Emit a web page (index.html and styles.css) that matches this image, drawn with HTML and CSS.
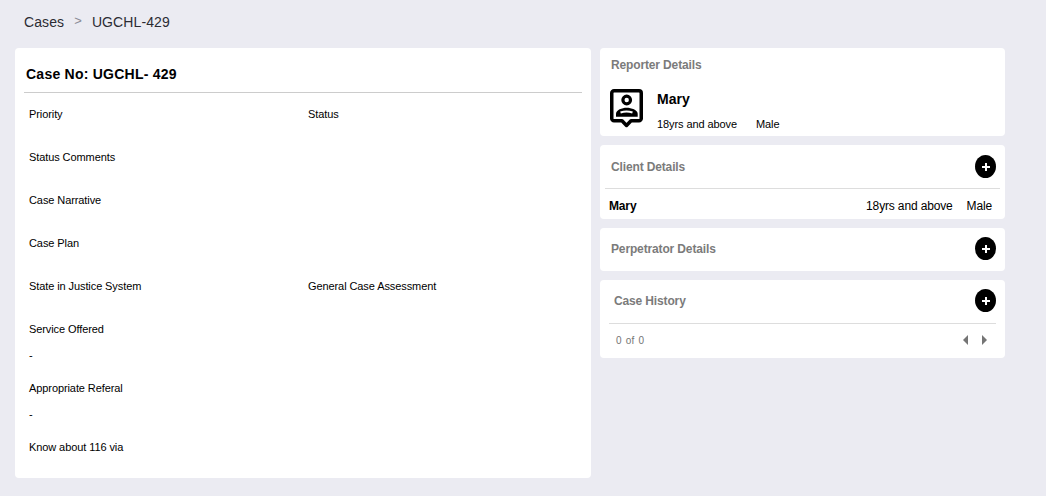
FILE: index.html
```html
<!DOCTYPE html>
<html lang="en">

<head>
    <meta charset="UTF-8">
    <meta name="viewport" content="width=device-width, initial-scale=1.0">
    <title>Case UGCHL-429</title>
    <link rel="stylesheet" href="styles.css">
</head>

<body>
    <div class="breadcrumb">
        <span>Cases</span>
        <span class="crumb-sep">&gt;</span>
        <span>UGCHL-429</span>
    </div>
    <div class="layout">
        <div class="card case-card">
            <h2 class="case-title">Case No: UGCHL- 429</h2>
            <div class="field-row">
                <div class="field">Priority</div>
                <div class="field">Status</div>
            </div>
            <div class="field-row">
                <div class="field">Status Comments</div>
            </div>
            <div class="field-row">
                <div class="field">Case Narrative</div>
            </div>
            <div class="field-row">
                <div class="field">Case Plan</div>
            </div>
            <div class="field-row">
                <div class="field">State in Justice System</div>
                <div class="field">General Case Assessment</div>
            </div>
            <div class="field-row field-row-value">
                <div class="field">Service Offered</div>
                <div class="field-value">-</div>
            </div>
            <div class="field-row field-row-value">
                <div class="field">Appropriate Referal</div>
                <div class="field-value">-</div>
            </div>
            <div class="field-row">
                <div class="field">Know about 116 via</div>
            </div>
        </div>

        <div class="side">
            <div class="card reporter-card">
                <div class="card-heading">Reporter Details</div>
                <div class="reporter">
                    <svg class="reporter-icon" viewBox="0 0 33 39" width="33" height="39">
                        <path d="M4 1.750h25a2.250 2.250 0 0 1 2.250 2.250v25.500a2.250 2.250 0 0 1-2.250 2.250h-8l-4.500 4.750-4.500-4.750h-8a2.250 2.250 0 0 1-2.250-2.250v-25.500a2.250 2.250 0 0 1 2.250-2.250z" fill="none" stroke="#000" stroke-width="3.500" stroke-linejoin="round"/>
                        <circle cx="16.700" cy="11" r="3.800" fill="none" stroke="#000" stroke-width="3.200"/>
                        <path d="M6 27.700v-3c0-3.700 6-6 10.700-6s11 2.300 11 6v3z" fill="#000"/>
                        <path d="M10.500 23.500c3.500-1.300 8.500-1.300 12 0" fill="none" stroke="#fff" stroke-width="2"/>
                    </svg>
                    <div>
                        <div class="reporter-name">Mary</div>
                        <div class="reporter-meta">
                            <span>18yrs and above</span>
                            <span>Male</span>
                        </div>
                    </div>
                </div>
            </div>

            <div class="card client-card">
                <div class="card-top">
                    <div class="card-heading">Client Details</div>
                    <button class="add-btn" type="button">
                        <svg viewBox="0 0 10 10" width="10" height="10"><path d="M5 1v8M1 5h8" stroke="#fff" stroke-width="2"/></svg>
                    </button>
                </div>
                <div class="client-row">
                    <span class="client-name">Mary</span>
                    <span class="client-age">18yrs and above</span>
                    <span>Male</span>
                </div>
            </div>

            <div class="card perp-card">
                <div class="card-top">
                    <div class="card-heading">Perpetrator Details</div>
                    <button class="add-btn" type="button">
                        <svg viewBox="0 0 10 10" width="10" height="10"><path d="M5 1v8M1 5h8" stroke="#fff" stroke-width="2"/></svg>
                    </button>
                </div>
            </div>

            <div class="card history-card">
                <div class="card-top">
                    <div class="card-heading">Case History</div>
                    <button class="add-btn" type="button">
                        <svg viewBox="0 0 10 10" width="10" height="10"><path d="M5 1v8M1 5h8" stroke="#fff" stroke-width="2"/></svg>
                    </button>
                </div>
                <div class="pager">
                    <span class="pager-count">0 of 0</span>
                    <span class="pager-arrows">
                        <svg viewBox="0 0 5 10" width="5" height="10"><path d="M5 0v10L0 5z" fill="#757575"/></svg>
                        <svg viewBox="0 0 5 10" width="5" height="10"><path d="M0 0v10l5-5z" fill="#757575"/></svg>
                    </span>
                </div>
            </div>
        </div>
    </div>
</body>

</html>
```

FILE: styles.css
```css
* {
    box-sizing: border-box;
}

body {
    margin: 0;
    height: 496px;
    overflow: hidden;
    background-color: #ebebf2;
    font-family: "Liberation Sans", Arial, sans-serif;
    color: #000;
}

.breadcrumb {
    display: flex;
    align-items: center;
    gap: 10px;
    height: 48px;
    padding: 0 0 4px 24px;
    font-size: 14px;
    letter-spacing: 0.1px;
    color: #2b2b33;
}

.crumb-sep {
    color: #8a8a94;
    font-size: 13px;
    padding-bottom: 3px;
}

.layout {
    display: flex;
    gap: 9px;
    padding-left: 15px;
}

.card {
    background-color: #fff;
    border-radius: 4px;
}

.case-card {
    width: 576px;
    height: 430px;
    padding: 0 9px;
}

.case-title {
    margin: 0;
    height: 45px;
    padding: 18px 0 0 2px;
    border-bottom: 1px solid #ccc;
    font-size: 14px;
    line-height: 16px;
    letter-spacing: 0.24px;
}

.field-row {
    display: flex;
    height: 43px;
    padding: 15px 0 0 5px;
    font-size: 11px;
    line-height: 13px;
    letter-spacing: -0.09px;
}

.field-row-value {
    display: block;
    height: 59px;
}

.field {
    flex: none;
    width: 279px;
}

.field-value {
    margin-top: 13px;
}

.side {
    display: flex;
    flex-direction: column;
    gap: 9px;
    width: 405px;
}

.card-heading {
    font-size: 12px;
    font-weight: bold;
    letter-spacing: -0.14px;
    color: #7b7b7b;
}

.reporter-card {
    height: 88px;
    padding: 10px 11px 0;
}

.reporter {
    display: flex;
    gap: 14px;
    margin-top: 10px;
}

.reporter-icon {
    margin: 7px 0 0 -1px;
}

.reporter-name {
    font-size: 14px;
    font-weight: bold;
    line-height: 16px;
    margin-top: 9px;
}

.reporter-meta {
    display: flex;
    gap: 19px;
    margin-top: 11px;
    font-size: 11px;
    line-height: 13px;
    letter-spacing: -0.09px;
}

.client-card {
    height: 74px;
    padding: 0 5px;
}

.card-top {
    display: flex;
    justify-content: space-between;
    align-items: center;
    height: 43px;
    padding: 0 4px 0 6px;
}

.client-card .card-top {
    height: 44px;
    border-bottom: 1px solid #ddd;
}

.add-btn {
    display: flex;
    align-items: center;
    justify-content: center;
    width: 21px;
    height: 23px;
    padding: 0;
    border: none;
    border-radius: 50%;
    background-color: #000;
    cursor: pointer;
}

.client-row {
    display: flex;
    align-items: center;
    height: 30px;
    padding: 3px 8px 0 4px;
    font-size: 12px;
    letter-spacing: -0.15px;
}

.client-name {
    font-weight: bold;
    margin-right: auto;
}

.client-age {
    margin-right: 14px;
}

.perp-card {
    height: 43px;
    padding: 0 5px;
}

.perp-card .card-top {
    height: 41px;
}

.history-card {
    height: 78px;
    padding: 0 9px;
}

.history-card .card-top {
    height: 44px;
    padding: 0 0 2px 5px;
    border-bottom: 1px solid #ddd;
}

.pager {
    display: flex;
    justify-content: space-between;
    align-items: center;
    height: 34px;
    padding: 0 9px 2px 7px;
    font-size: 10px;
    word-spacing: 1.500px;
    color: #757575;
}

.pager-arrows {
    display: flex;
    gap: 14px;
}
```
